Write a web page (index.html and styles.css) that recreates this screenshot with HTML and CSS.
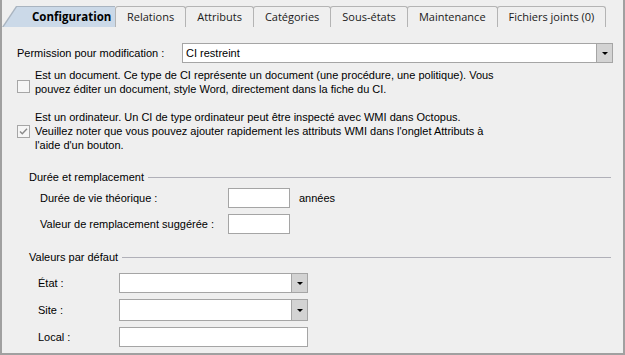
FILE: index.html
```html
<!DOCTYPE html>
<html lang="fr">
<head>
    <meta charset="UTF-8">
    <title>Configuration</title>
    <link rel="stylesheet" href="styles.css">
</head>
<body>
    <div class="window">
        <div class="tabs">
            <div class="tab active"><div class="tab-fill">Configuration</div></div>
            <div class="tab">Relations</div>
            <div class="tab">Attributs</div>
            <div class="tab">Catégories</div>
            <div class="tab">Sous-états</div>
            <div class="tab">Maintenance</div>
            <div class="tab">Fichiers joints (0)</div>
        </div>

        <div class="panel">
            <div class="perm">
                <span class="perm-label">Permission pour modification :</span>
                <div class="combo wide">
                    <span class="combo-text">CI restreint</span>
                    <span class="combo-btn"><i class="arrow"></i></span>
                </div>
            </div>

            <div class="check doc">
                <span class="box"></span>
                <p>Est un document. Ce type de CI représente un document (une procédure, une politique). Vous<br>pouvez éditer un document, style Word, directement dans la fiche du CI.</p>
            </div>

            <div class="check pc">
                <span class="box">
                    <svg width="11" height="11" viewBox="0 0 11 11"><path d="M2 5.5 L4.3 7.8 L9 2.8" fill="none" stroke="#8a8a8a" stroke-width="1.4"/></svg>
                </span>
                <p>Est un ordinateur. Un CI de type ordinateur peut être inspecté avec WMI dans Octopus.<br>Veuillez noter que vous pouvez ajouter rapidement les attributs WMI dans l'onglet Attributs à<br>l'aide d'un bouton.</p>
            </div>

            <div class="group first">
                <div class="group-title"><span>Durée et remplacement</span></div>
                <div class="grid-duree">
                    <span>Durée de vie théorique :</span>
                    <div class="field small"></div>
                    <span class="unit">années</span>
                    <span>Valeur de remplacement suggérée :</span>
                    <div class="field small"></div>
                    <span></span>
                </div>
            </div>

            <div class="group second">
                <div class="group-title"><span>Valeurs par défaut</span></div>
                <div class="grid-defaut">
                    <span>État :</span>
                    <div class="combo">
                        <span class="combo-text"></span>
                        <span class="combo-btn"><i class="arrow"></i></span>
                    </div>
                    <span>Site :</span>
                    <div class="combo tall">
                        <span class="combo-text"></span>
                        <span class="combo-btn"><i class="arrow"></i></span>
                    </div>
                    <span>Local :</span>
                    <div class="field"></div>
                </div>
            </div>
        </div>
    </div>
</body>
</html>
```

FILE: styles.css
```css
body {
    margin: 0;
    padding: 0;
    font-family: "Liberation Sans", Arial, sans-serif;
    font-size: 11px;
    color: #000000;
    background-color: #efefef;
}
.window {
    width: 621px;
    height: 353px;
    border: 2px solid #a0a0a0;
    border-top: none;
    background-color: #efefef;
}

/* onglets */
.tabs {
    display: flex;
    height: 27px;
    padding-top: 6px;
    box-sizing: border-box;
    font-family: "Open Sans", "Noto Sans", sans-serif;
    font-size: 11px;
}
.tab {
    height: 21px;
    line-height: 20px;
    padding: 0 11px;
    border: 1px solid #b4b4b4;
    border-bottom: none;
    border-radius: 3px 3px 0 0;
    margin-right: -1px;
    box-sizing: border-box;
    color: #1a1a1a;
}
.tab.active {
    width: 113px;
    padding: 0;
    border: none;
    border-radius: 0;
    margin-right: 0;
    background-color: #a9b4c0;
    clip-path: polygon(14px 0, 100% 0, 100% 100%, 0 100%);
}
.tab-fill {
    height: 21px;
    margin: 1px 0 0 1px;
    background-color: #cbd9e8;
    clip-path: polygon(14px 0, 100% 0, 100% 100%, 0 100%);
    font-weight: bold;
    font-size: 11.5px;
    padding-left: 29px;
    color: #000000;
}

.panel {
    padding: 16px 10px 0 15px;
}

/* permission */
.perm {
    display: flex;
    align-items: center;
}
.perm-label {
    width: 165px;
}
.combo {
    display: flex;
    height: 20px;
    border: 1px solid #a5a5a5;
    background-color: #ffffff;
    box-sizing: border-box;
}
.combo.wide {
    width: 431px;
}
.combo.tall {
    height: 22px;
}
.combo-text {
    flex: 1;
    padding-left: 3px;
    line-height: 18px;
}
.combo-btn {
    width: 15px;
    background-color: #d3d3d3;
    border-left: 1px solid #a5a5a5;
    display: flex;
    align-items: center;
    justify-content: center;
}
.arrow {
    width: 0;
    height: 0;
    border-left: 3px solid transparent;
    border-right: 3px solid transparent;
    border-top: 3px solid #000000;
}

/* cases a cocher */
.check {
    display: flex;
    align-items: flex-start;
}
.check p {
    margin: 0;
    line-height: 14px;
}
.doc {
    margin-top: 5px;
}
.pc {
    margin-top: 14px;
}
.box {
    width: 13px;
    height: 13px;
    box-sizing: border-box;
    border: 1px solid #a6a6a6;
    background-color: #f6f6f6;
    margin-right: 5px;
    flex: none;
    display: flex;
    align-items: center;
    justify-content: center;
}
.doc .box {
    margin-top: 12px;
}
.pc .box {
    margin-top: 15px;
}

/* groupes */
.group-title {
    display: flex;
    align-items: center;
    margin-left: 12px;
    margin-right: 2px;
}
.group-title::after {
    content: "";
    flex: 1;
    height: 1px;
    background-color: #b0b0b8;
    margin-left: 4px;
}
.group.first {
    margin-top: 19px;
}
.group.second {
    margin-top: 17px;
}
.grid-duree {
    display: grid;
    grid-template-columns: 188px 62px auto;
    grid-auto-rows: 20px;
    row-gap: 6px;
    align-items: center;
    margin: 5px 0 0 23px;
}
.unit {
    padding-left: 9px;
}
.field {
    height: 20px;
    border: 1px solid #a5a5a5;
    background-color: #ffffff;
    box-sizing: border-box;
}
.grid-defaut {
    display: grid;
    grid-template-columns: 81px 189px;
    row-gap: 6px;
    align-items: center;
    margin: 10px 0 0 21px;
}
```
